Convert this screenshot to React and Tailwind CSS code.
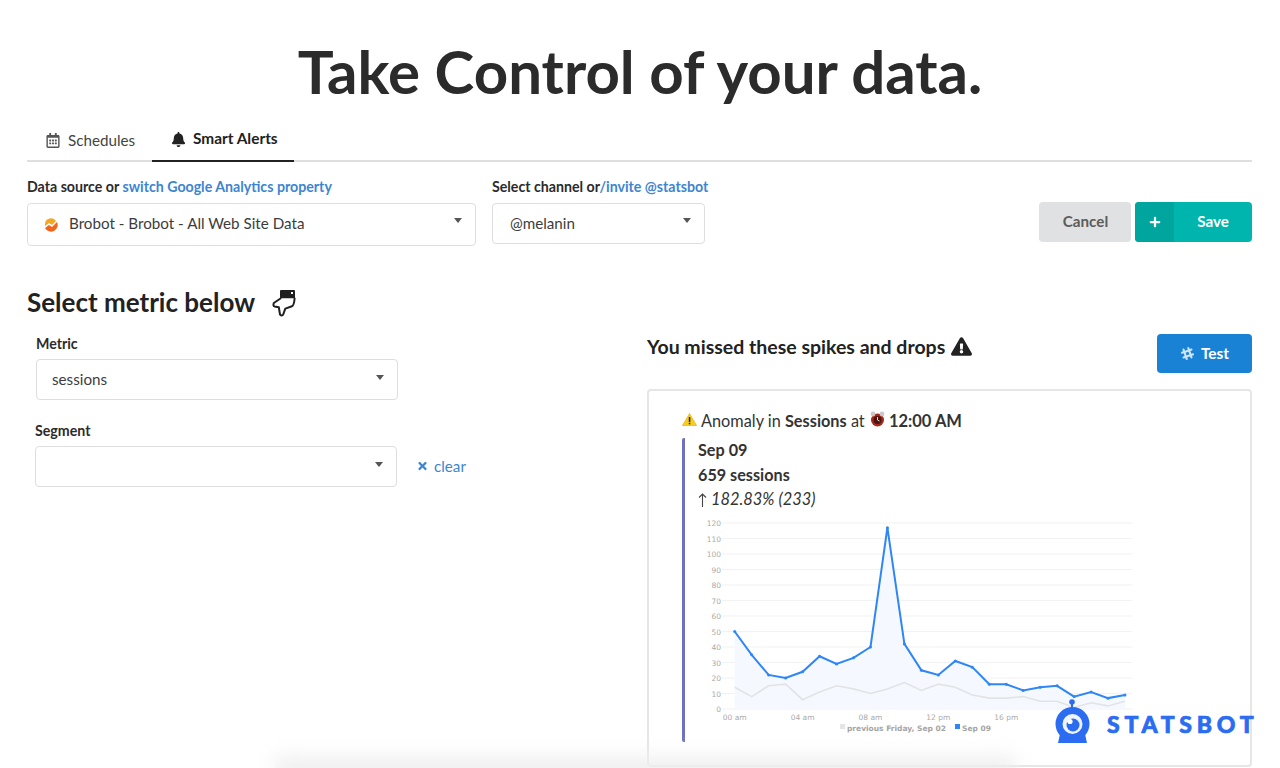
import React from "react";
import { FaRegCalendarAlt, FaBell, FaPlus, FaSlackHash, FaExclamationTriangle, FaTimes } from "react-icons/fa";

const blue = [50,35,22,20,24,34,29,33,40,117,42,25,22,31,27,16,16,12,14,15,8,11,7,9];
const gray = [14,8,15,16,6,11,15,13,10,13,17,12,16,14,9,7,7,8,5,5,1,4,2,5];
const X = (i) => 734.7 + i * 16.97;
const Y = (v) => 709 - v * 1.55;
const OX = 693, OY = 515;
const pts = (a) => a.map((v, i) => `${(X(i) - OX).toFixed(1)},${(Y(v) - OY).toFixed(1)}`).join(" ");

function Caret({ className }) {
  return <span className={`absolute right-[13px] w-0 h-0 border-x-[4px] border-x-transparent border-t-[5px] border-t-[#555] ${className}`} />;
}

function Select({ className, caret = "top-[15px]", children }) {
  return (
    <div className={`relative bg-white border border-[#dedede] rounded-[4px] flex items-center text-[15.2px] text-[#3c3c3c] ${className}`}>
      {children}
      <Caret className={caret} />
    </div>
  );
}

function Chart() {
  const ticks = [];
  for (let v = 0; v <= 120; v += 10) ticks.push(v);
  return (
    <svg width="445" height="225" viewBox="0 0 445 225" className="block absolute left-[693px] top-[515px]" style={{ fontFamily: "'DejaVu Sans', sans-serif" }}>
      {ticks.map((v) => (
        <g key={v}>
          <line x1="29" x2="439" y1={Y(v) - OY} y2={Y(v) - OY} stroke="#f1f2f4" strokeWidth="1.2" />
          <text x="28" y={Y(v) - OY + 3} textAnchor="end" fontSize="7.5" fill="#aaaaaa">{v}</text>
        </g>
      ))}
      <polygon points={`${X(0) - OX},${Y(0) - OY} ${pts(blue)} ${X(23) - OX},${Y(0) - OY}`} fill="#f5f9ff" />
      <polyline points={pts(gray)} fill="none" stroke="#e2e3e5" strokeWidth="1.6" />
      <polyline points={pts(blue)} fill="none" stroke="#2f86f6" strokeWidth="2" />
      {blue.map((v, i) => <circle key={i} cx={X(i) - OX} cy={Y(v) - OY} r="1.5" fill="#2f86f6" />)}
      {[["00 am", 0], ["04 am", 4], ["08 am", 8], ["12 pm", 12], ["16 pm", 16], ["20 pm", 20]].map(([t, i]) => (
        <text key={t} x={X(i) - OX} y="205" textAnchor="middle" fontSize="7.5" fill="#aaaaaa">{t}</text>
      ))}
      <rect x="147" y="209" width="5" height="5" fill="#e5e5e5" />
      <text x="154" y="216" fontSize="7.5" fontWeight="700" fill="#a5a5a5">previous Friday, Sep 02</text>
      <rect x="262" y="209" width="5" height="5" fill="#2f86f6" />
      <text x="269" y="216" fontSize="7.5" fontWeight="700" fill="#a5a5a5">Sep 09</text>
    </svg>
  );
}

function Logo() {
  return (
    <div className="absolute left-[1055px] top-[697px] flex items-start">
      <svg width="36" height="47" viewBox="0 0 36 47">
        <circle cx="17" cy="5" r="2.8" fill="#2b6cf0" />
        <rect x="16" y="6" width="2" height="6" fill="#2b6cf0" />
        <circle cx="17.5" cy="27" r="17" fill="#2b6cf0" />
        <path d="M3 46 L5 37 L30 37 L32 46 Z" fill="#2b6cf0" />
        <circle cx="17.5" cy="27" r="10" fill="#ffffff" fillOpacity="0.92" />
        <circle cx="18" cy="28" r="6.5" fill="#2b6cf0" />
        <circle cx="15" cy="24.5" r="2.6" fill="#ffffff" />
      </svg>
      <span className="ml-[16px] mt-[13px] text-[23px] leading-[28px] font-black tracking-[4.75px] text-[#2b6cf0] [-webkit-text-stroke:0.7px_#2b6cf0]">STATSBOT</span>
    </div>
  );
}

export default function App() {
  return (
    <div className="relative w-[1280px] h-[768px] overflow-hidden bg-white text-[#2b2b2b]" style={{ fontFamily: "Lato, sans-serif" }}>
      <h1 className="pt-[35px] text-center text-[60px] leading-[72px] font-bold text-[#2b2b2b]">Take Control of your data.</h1>

      <div className="ml-[27px] mr-[28px] mt-[11px] flex h-[44px] border-b-2 border-[#dfdfdf]">
        <div className="flex items-center pl-[19px] w-[125px] h-[44px] gap-[8px] text-[15.2px] text-[#444]">
          <FaRegCalendarAlt className="w-[14px] h-[15px] text-[#555]" />
          <span>Schedules</span>
        </div>
        <div className="flex items-center pl-[19px] w-[142px] h-[44px] gap-[7px] border-b-2 border-[#222] text-[15.4px] font-bold text-[#222]">
          <FaBell className="w-[15px] h-[15px]" />
          <span>Smart Alerts</span>
        </div>
      </div>

      <div className="ml-[27px] mr-[28px] mt-[15px] flex items-start">
        <div className="w-[449px]">
          <div className="text-[14.2px] leading-[20px] font-bold text-[#2b2b2b]">Data source or <a className="text-[#3d85d1]">switch Google Analytics property</a></div>
          <Select className="mt-[6px] h-[43px] pl-[16px] pb-[2px]" caret="top-[14px]">
            <svg width="14" height="14" viewBox="0 0 14 14" className="mr-[11px] mt-[3px]">
              <path d="M1 6a6 6 0 0 1 11-3l-4 4-3-2-4 3z" fill="#f5a623" />
              <path d="M1 10l4-3 3 2 5-5a6 6 0 0 1-12 6z" fill="#f2651c" />
            </svg>
            <span>Brobot - Brobot - All Web Site Data</span>
          </Select>
        </div>
        <div className="ml-[16px] w-[213px]">
          <div className="text-[14.2px] leading-[20px] font-bold text-[#2b2b2b] whitespace-nowrap">Select channel or<a className="text-[#3d85d1]">/invite @statsbot</a></div>
          <Select className="mt-[6px] h-[41px] pl-[17px] pb-[1px]" caret="top-[14px]">@melanin</Select>
        </div>
        <div className="ml-auto mt-[25px] flex gap-[4px]">
          <button className="w-[92px] h-[40px] rounded-[4px] bg-[#e0e1e2] text-[15.2px] font-bold text-[#5c5c5c] pb-[1px] pl-[1px]">Cancel</button>
          <button className="w-[117px] h-[40px] rounded-[4px] bg-[#00b5ad] text-white flex items-center overflow-hidden text-[15.2px] font-bold">
            <span className="w-[39px] h-full bg-[#00a59d] flex items-center justify-center"><FaPlus className="w-[12px] h-[12px]" /></span>
            <span className="flex-1 text-center pb-[1px]">Save</span>
          </button>
        </div>
      </div>

      <div className="absolute left-[27px] top-[285px] flex items-center">
        <h2 className="text-[26px] leading-[34px] font-bold text-[#222] whitespace-nowrap">Select metric below</h2>
        <svg width="25" height="28" viewBox="0 0 25 28" className="ml-[17px] mt-[2px]">
          <rect x="8" y="1" width="15" height="8.5" rx="1" fill="#1f1f1f" />
          <rect x="19" y="3" width="2" height="2" fill="#fff" />
          <path d="M8.5 9.5 L1.8 14 Q0.8 16.8 2.5 17.4 L6.8 18.2 L8 25.5 Q10 27.5 11.2 25.5 L13.3 19.6 L20 17.2 Q22 16.5 22.6 9.5" fill="#fff" stroke="#1f1f1f" strokeWidth="2" strokeLinejoin="round" strokeLinecap="round" />
        </svg>
      </div>

      <div className="absolute left-[35px] top-[334px] w-[440px]">
        <div className="pl-[1px] text-[14.2px] leading-[20px] font-bold text-[#2b2b2b]">Metric</div>
        <Select className="mt-[5px] ml-[1px] w-[362px] h-[41px] pl-[15px]">sessions</Select>
        <div className="mt-[21px] text-[14.2px] leading-[20px] font-bold text-[#2b2b2b]">Segment</div>
        <div className="mt-[5px] flex items-center">
          <Select className="w-[362px] h-[41px]" />
          <span className="ml-[20px] flex items-center gap-[6px] text-[15.2px] text-[#3d85d1]"><FaTimes className="w-[11px] h-[12px]" />clear</span>
        </div>
      </div>

      <div className="absolute left-[647px] top-[334px] w-[605px]">
        <div className="flex items-start justify-between">
          <div className="flex items-center h-[25px] gap-[6px] text-[19.5px] font-bold text-[#222] whitespace-nowrap">You missed these spikes and drops <FaExclamationTriangle className="w-[21px] h-[19px]" /></div>
          <button className="w-[95px] h-[39px] rounded-[4px] bg-[#1a82d4] text-white flex items-center justify-center gap-[6px] text-[15.4px] font-bold">
            <FaSlackHash className="w-[15px] h-[15px] text-[#cfe4f6]" />Test
          </button>
        </div>
        <div className="mt-[16px] h-[378px] border-2 border-[#e6e6e6] rounded-[4px] bg-white pl-[33px] pt-[18px] text-[#333]">
          <div className="flex items-center h-[24px] text-[16.3px] whitespace-nowrap">
            <svg width="15" height="13" viewBox="0 0 15 13" className="mr-[4px] -mt-[3px]">
              <path d="M7.5 0.5 L14.7 12.7 L0.3 12.7 Z" fill="#f7cc1f" stroke="#e6ad00" strokeWidth="0.6" strokeLinejoin="round" />
              <rect x="6.8" y="4" width="1.5" height="5" fill="#222" />
              <rect x="6.8" y="9.8" width="1.5" height="1.5" fill="#222" />
            </svg>
            <span>Anomaly in&nbsp;</span><b>Sessions</b><span>&nbsp;at&nbsp;</span>
            <svg width="15" height="16" viewBox="0 0 15 16" className="mx-[1px] -mt-[5px]">
              <circle cx="7.5" cy="9" r="6.5" fill="#a8281c" />
              <circle cx="3" cy="3" r="2.4" fill="#c9c9c9" />
              <circle cx="12" cy="3" r="2.4" fill="#c9c9c9" />
              <circle cx="7.5" cy="9" r="4" fill="#4a1410" />
              <path d="M7.5 6v3l2 1" stroke="#f0d0c0" strokeWidth="1" fill="none" />
            </svg>
            <b className="ml-[3px] text-[16.5px]">12:00 AM</b>
          </div>
          <div className="mt-[5px] h-[304px] border-l-[3.5px] border-[#6e72bd] rounded-[2px] pl-[13px] text-[16.2px] leading-[24.5px]">
            <div className="font-bold">Sep 09</div>
            <div className="font-bold">659 sessions</div>
            <div className="flex items-center">
              <svg width="9" height="14" viewBox="0 0 9 14" className="mr-[4px] mt-[2px]">
                <path d="M4.5 14V1M1 4.5 4.5 1 8 4.5" fill="none" stroke="#444" strokeWidth="1.1" />
              </svg>
              <i className="text-[16.4px]">182.83% (233)</i>
            </div>
          </div>
        </div>
      </div>

      <Chart />
      <div className="absolute left-[275px] w-[740px] top-[757px] h-[24px] bg-[#eeeeee] blur-[10px]" />
      <Logo />
    </div>
  );
}
